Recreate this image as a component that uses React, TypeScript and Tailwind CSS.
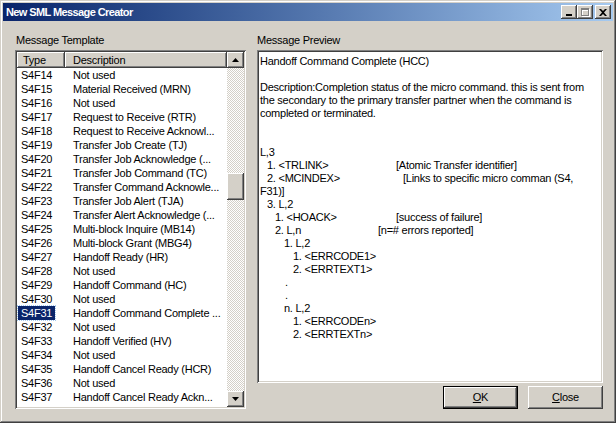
import React from 'react'

const raised =
  'shadow-[inset_-1px_-1px_#404040,inset_1px_1px_#ffffff,inset_-2px_-2px_#808080,inset_2px_2px_#d4d0c8]'
const sunken =
  'shadow-[inset_1px_1px_#808080,inset_-1px_-1px_#ffffff,inset_2px_2px_#404040,inset_-2px_-2px_#d4d0c8]'

const templates: [string, string][] = [
  ['S4F14', 'Not used'],
  ['S4F15', 'Material Received (MRN)'],
  ['S4F16', 'Not used'],
  ['S4F17', 'Request to Receive (RTR)'],
  ['S4F18', 'Request to Receive Acknowl...'],
  ['S4F19', 'Transfer Job Create (TJ)'],
  ['S4F20', 'Transfer Job Acknowledge (...'],
  ['S4F21', 'Transfer Job Command (TC)'],
  ['S4F22', 'Transfer Command Acknowle...'],
  ['S4F23', 'Transfer Job Alert (TJA)'],
  ['S4F24', 'Transfer Alert Acknowledge (...'],
  ['S4F25', 'Multi-block Inquire (MB14)'],
  ['S4F26', 'Multi-block Grant (MBG4)'],
  ['S4F27', 'Handoff Ready (HR)'],
  ['S4F28', 'Not used'],
  ['S4F29', 'Handoff Command (HC)'],
  ['S4F30', 'Not used'],
  ['S4F31', 'Handoff Command Complete ...'],
  ['S4F32', 'Not used'],
  ['S4F33', 'Handoff Verified (HV)'],
  ['S4F34', 'Not used'],
  ['S4F35', 'Handoff Cancel Ready (HCR)'],
  ['S4F36', 'Not used'],
  ['S4F37', 'Handoff Cancel Ready Ackn...'],
]

interface Line {
  text: string
  pad?: string
  tab?: string
  note?: string
}

const preview: Line[] = [
  { text: 'Handoff Command Complete (HCC)' },
  { text: '' },
  { text: 'Description:Completion status of the micro command. this is sent from' },
  { text: 'the secondary to the primary transfer partner when the command is' },
  { text: 'completed or terminated.' },
  { text: '' },
  { text: '' },
  { text: 'L,3' },
  { text: '1. <TRLINK>', pad: 'pl-[7px]', tab: 'w-[136px]', note: '[Atomic Transfer identifier]' },
  { text: '2. <MCINDEX>', pad: 'pl-[7px]', tab: 'w-[143px]', note: '[Links to specific micro comman (S4,' },
  { text: 'F31)]' },
  { text: '3. L,2', pad: 'pl-[7px]' },
  { text: '1. <HOACK>', pad: 'pl-[15px]', tab: 'w-[136px]', note: '[success of failure]' },
  { text: '2. L,n', pad: 'pl-[15px]', tab: 'w-[118px]', note: '[n=# errors reported]' },
  { text: '1. L,2', pad: 'pl-[24px]' },
  { text: '1. <ERRCODE1>', pad: 'pl-[33px]' },
  { text: '2. <ERRTEXT1>', pad: 'pl-[33px]' },
  { text: '.', pad: 'pl-[25px]' },
  { text: '.', pad: 'pl-[25px]' },
  { text: 'n. L,2', pad: 'pl-[24px]' },
  { text: '1. <ERRCODEn>', pad: 'pl-[33px]' },
  { text: '2. <ERRTEXTn>', pad: 'pl-[33px]' },
]

function CaptionButton({ children }: { children: React.ReactNode }) {
  return (
    <div className={`w-[16px] h-[14px] bg-[#d4d0c8] flex items-center justify-center ${raised}`}>
      {children}
    </div>
  )
}

function Arrow({ down }: { down?: boolean }) {
  return (
    <div className={`h-[16px] bg-[#d4d0c8] flex items-center justify-center ${raised}`}>
      <svg width="7" height="4" viewBox="0 0 7 4">
        <path d={down ? 'M0 0h7L3.5 4z' : 'M3.5 0L7 4H0z'} fill="#000" />
      </svg>
    </div>
  )
}

export default function App() {
  return (
    <div
      className={`w-[616px] h-[423px] bg-[#d4d0c8] p-[3px] flex flex-col text-[11px] leading-[13px] tracking-[-0.25px] text-black font-['Liberation_Sans',Arial,sans-serif] shadow-[inset_-1px_-1px_#404040,inset_1px_1px_#d4d0c8,inset_-2px_-2px_#808080,inset_2px_2px_#ffffff]`}
    >
      {/* title bar */}
      <div className="h-[18px] flex items-center justify-between pl-[3px] pr-[2px] bg-gradient-to-r from-[#0a246a] to-[#a6caf0]">
        <span className="text-white font-bold text-[11px] tracking-[-0.6px]">New SML Message Creator</span>
        <div className="flex items-center">
          <CaptionButton>
            <svg width="8" height="8" viewBox="0 0 8 8">
              <rect x="1" y="6" width="6" height="2" fill="#000" />
            </svg>
          </CaptionButton>
          <CaptionButton>
            <svg width="9" height="9" viewBox="0 0 9 9">
              <path d="M1 1h8v8H1zM2 3v5h6V3z" fill="#ffffff" fillRule="evenodd" />
              <path d="M0 0h8v8H0zM1 2v5h6V2z" fill="#808080" fillRule="evenodd" />
            </svg>
          </CaptionButton>
          <div className="w-[2px]" />
          <CaptionButton>
            <svg width="8" height="7" viewBox="0 0 8 7">
              <path d="M0 0h2l2 2 2-2h2L5 3.5 8 7H6L4 5 2 7H0l3-3.5z" fill="#000" />
            </svg>
          </CaptionButton>
        </div>
      </div>

      {/* body */}
      <div className="flex-1 flex pl-[12px] pr-[10px]">
        {/* left: template list */}
        <div className="w-[231px] flex flex-col">
          <div className="mt-[13px] h-[13px] pl-[1px]">Message Template</div>
          <div className={`mt-[3px] h-[359px] bg-white p-[2px] flex ${sunken}`}>
            <div className="flex-1 flex flex-col overflow-hidden">
              <div className="h-[16px] flex">
                <div className={`w-[48px] pl-[6px] flex items-center bg-[#d4d0c8] ${raised}`}>Type</div>
                <div className={`flex-1 pl-[8px] flex items-center bg-[#d4d0c8] ${raised}`}>Description</div>
              </div>
              {templates.map(([type, desc]) => {
                const selected = type === 'S4F31'
                return (
                  <div key={type} className="h-[14px] flex items-center whitespace-nowrap">
                    <div className="w-[48px] pl-[1px]">
                      <span
                        className={
                          selected
                            ? 'px-[3px] py-[1px] bg-[#0a246a] text-white outline-1 outline-dotted outline-[#a6caf0]'
                            : 'px-[3px]'
                        }
                      >
                        {type}
                      </span>
                    </div>
                    <div className="flex-1 pl-[8px] overflow-hidden">{desc}</div>
                  </div>
                )
              })}
            </div>
            {/* scrollbar */}
            <div className="w-[17px] flex flex-col bg-[repeating-conic-gradient(#d4d0c8_0_25%,#ffffff_0_50%)] bg-[length:2px_2px]">
              <Arrow />
              <div className="flex-1 flex flex-col">
                <div className={`mt-[105px] h-[27px] bg-[#d4d0c8] ${raised}`} />
              </div>
              <Arrow down />
            </div>
          </div>
        </div>

        {/* right: preview */}
        <div className="ml-[11px] flex-1 flex flex-col">
          <div className="mt-[13px] h-[13px]">Message Preview</div>
          <div className={`mt-[3px] h-[333px] bg-white pt-[5px] pl-[3px] pr-[2px] overflow-hidden ${sunken}`}>
            {preview.map((line, i) => (
              <div key={i} className="h-[13px] flex whitespace-pre">
                {line.note ? (
                  <>
                    <span className={`${line.pad ?? ''} ${line.tab ?? ''} shrink-0`}>{line.text}</span>
                    <span>{line.note}</span>
                  </>
                ) : (
                  <span className={line.pad ?? ''}>{line.text}</span>
                )}
              </div>
            ))}
          </div>
          <div className="mt-[3px] flex justify-end gap-[10px]">
            <button className="w-[75px] h-[23px] border border-black bg-[#d4d0c8] p-0">
              <div className={`w-full h-full flex items-center justify-center ${raised}`}>
                <span>
                  <span className="underline">O</span>K
                </span>
              </div>
            </button>
            <button className={`w-[75px] h-[23px] bg-[#d4d0c8] flex items-center justify-center ${raised}`}>
              <span>
                <span className="underline">C</span>lose
              </span>
            </button>
          </div>
        </div>
      </div>
    </div>
  )
}
